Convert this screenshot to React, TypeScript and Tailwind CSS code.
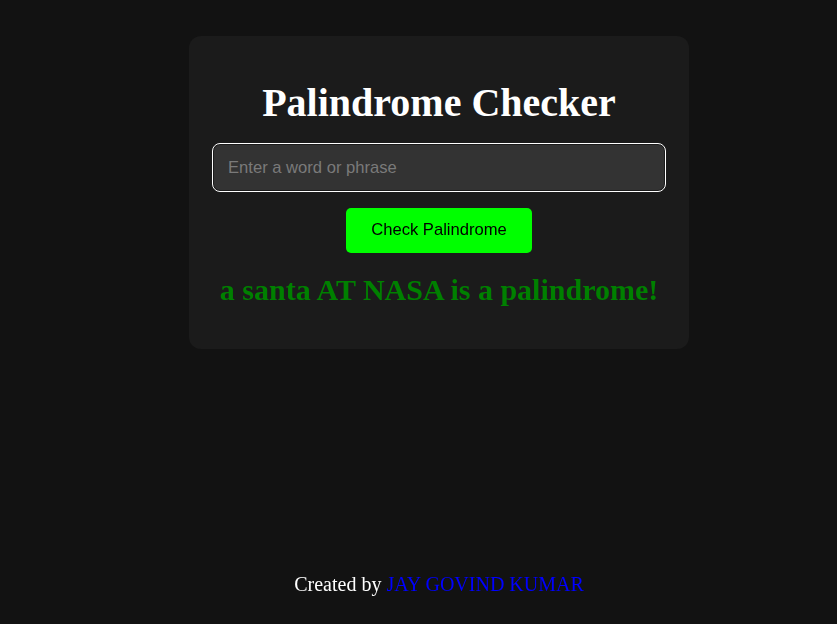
import React from "react";

export default function App() {
  return (
    <div className="min-h-[624px] w-full bg-[#121212] flex flex-col items-center pl-[41px]" style={{ fontFamily: '"Liberation Serif", "Times New Roman", serif' }}>
      <div className="mt-[36px] w-[500px] h-[313px] rounded-[12px] bg-[#1b1b1b] flex flex-col items-center pt-[44px]">
        <h1 className="text-[40px] leading-[46px] font-bold text-white">Palindrome Checker</h1>
        <input
          autoFocus
          placeholder="Enter a word or phrase"
          className="mt-[18px] w-[452px] h-[47px] rounded-[7px] bg-[#333333] border border-[#1b1b1b] outline outline-[1.5px] outline-white px-[14px] text-[16.6px] text-white placeholder:text-[#7a7a7a]"
          style={{ fontFamily: '"Liberation Sans", Arial, sans-serif' }}
        />
        <button
          className="mt-[17px] w-[186px] h-[45px] rounded-[5px] bg-[#00ff00] text-black text-[16.6px]"
          style={{ fontFamily: '"Liberation Sans", Arial, sans-serif' }}
        >
          Check Palindrome
        </button>
        <p className="mt-[18px] text-[30px] leading-[38px] font-bold text-[#008000]">a santa AT NASA is a palindrome!</p>
      </div>
      <div className="mt-[220px] text-[20px] text-white">
        Created by <a className="text-[#0000ff]">JAY GOVIND KUMAR</a>
      </div>
    </div>
  );
}
